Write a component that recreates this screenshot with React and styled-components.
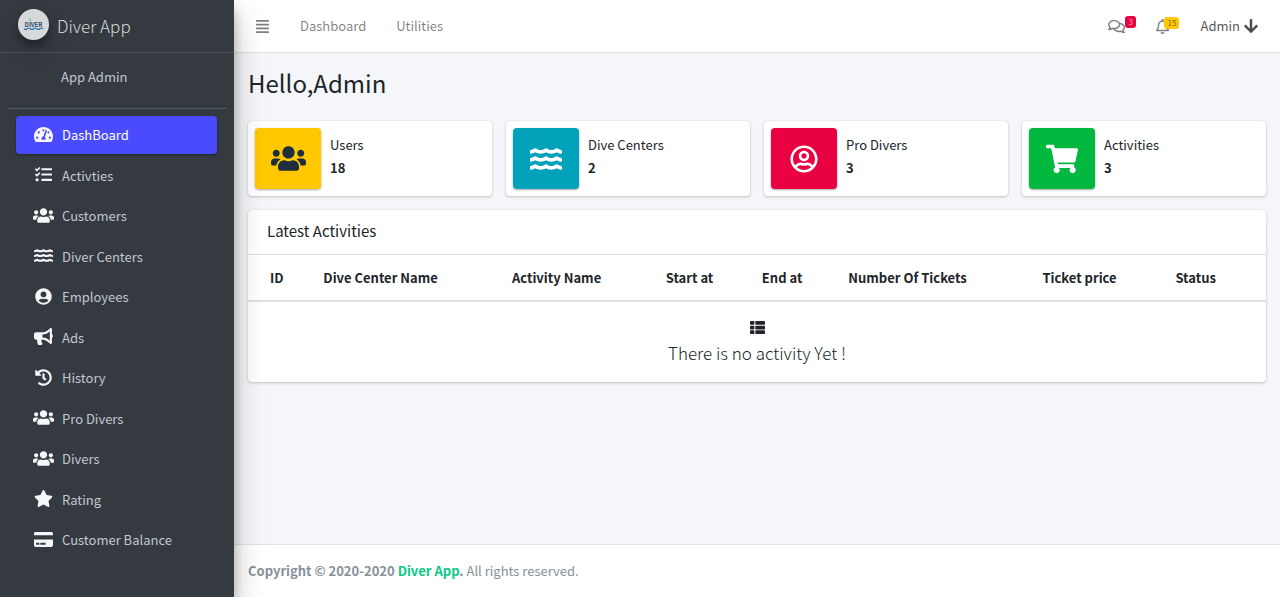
import React from "react";
import styled, { createGlobalStyle, css } from "styled-components";
import {
  FaAlignJustify,
  FaArrowDown,
  FaBullhorn,
  FaCreditCard,
  FaHistory,
  FaRegBell,
  FaRegComments,
  FaRegUserCircle,
  FaShoppingCart,
  FaStar,
  FaTachometerAlt,
  FaTasks,
  FaThList,
  FaUserCircle,
  FaUsers,
  FaWater,
} from "react-icons/fa";

const GlobalStyle = createGlobalStyle`
  *, *::before, *::after { box-sizing: border-box; }
  body {
    margin: 0;
    background: #f4f6f9;
    color: #212529;
    font-family: "Noto Sans CJK SC", "Noto Sans", sans-serif;
    font-size: 13px;
    line-height: 22px;
  }
  a { color: inherit; text-decoration: none; }
  button { font: inherit; color: inherit; background: none; border: 0; padding: 0; cursor: pointer; }
  ul { list-style: none; margin: 0; padding: 0; }
  svg { display: block; flex: none; }
`;

const Page = styled.div`
  display: flex;
  min-height: 100vh;
`;

const Sidebar = styled.aside`
  flex: none;
  width: 234px;
  background: #343a40;
  color: #c2c7d0;
  box-shadow: 0 14px 28px rgba(0, 0, 0, 0.25), 0 10px 10px rgba(0, 0, 0, 0.22);
  z-index: 1;
`;

const Brand = styled.a`
  display: flex;
  align-items: center;
  gap: 8px;
  height: 53px;
  padding: 0 18px;
  border-bottom: 1px solid #4b545c;
  font-size: 17px;
  font-weight: 300;
  color: rgba(255, 255, 255, 0.8);
`;

const LogoDisc = styled.span`
  display: block;
  width: 31px;
  height: 31px;
  margin-bottom: 3px;
  border-radius: 50%;
  background: #d6d8d9;
  box-shadow: 0 10px 20px rgba(0, 0, 0, 0.19), 0 6px 6px rgba(0, 0, 0, 0.23);
`;

const UserPanel = styled.div`
  margin: 0 7px;
  padding: 13px 0 20px 54px;
  border-bottom: 1px solid #4f5962;
`;

const Menu = styled.ul`
  display: flex;
  flex-direction: column;
  justify-content: space-between;
  min-height: 443px;
  margin: 7px 17px 20px 16px;
`;

const MenuLink = styled.a`
  display: flex;
  align-items: center;
  gap: 6px;
  height: 38px;
  padding: 0 15px;
  border-radius: 4px;
  ${(p) =>
    p.$active &&
    css`
      background: #4a4aff;
      color: #fff;
      box-shadow: 0 1px 3px rgba(0, 0, 0, 0.12), 0 1px 2px rgba(0, 0, 0, 0.24);
    `}
`;

const MenuIcon = styled.span`
  display: flex;
  justify-content: center;
  width: 25px;
  margin-bottom: 2px;
  color: #f4f6f9;
`;

const Main = styled.div`
  flex: 1;
  min-width: 0;
  display: flex;
  flex-direction: column;
`;

const TopBar = styled.header`
  display: flex;
  justify-content: space-between;
  align-items: center;
  height: 53px;
  padding: 0 21px;
  background: #fff;
  border-bottom: 1px solid #dee2e6;
  color: rgba(0, 0, 0, 0.5);
`;

const NavGroup = styled.nav`
  display: flex;
  align-items: center;
  gap: 30px;
`;

const AlertButton = styled.button`
  position: relative;
`;

const Badge = styled.span`
  position: absolute;
  top: -2px;
  left: ${(p) => p.$left};
  padding: 0 3px;
  border-radius: 3px;
  font-size: 8px;
  line-height: 12px;
  background: ${(p) => p.$bg};
  color: ${(p) => p.$fg};
`;

const AccountButton = styled.button`
  display: flex;
  align-items: center;
  gap: 3px;
  color: rgba(0, 0, 0, 0.7);
`;

const Content = styled.main`
  flex: 1;
  padding: 14px;
`;

const Title = styled.h1`
  margin: 0 0 22px;
  font-size: 24px;
  line-height: 32px;
  font-weight: 400;
`;

const raised = css`
  background: #fff;
  border-radius: 4px;
  box-shadow: 0 0 1px rgba(0, 0, 0, 0.125), 0 1px 3px rgba(0, 0, 0, 0.2);
`;

const Stats = styled.section`
  display: grid;
  grid-template-columns: repeat(4, 1fr);
  gap: 14px;
  margin-bottom: 14px;
`;

const StatCard = styled.article`
  ${raised}
  display: flex;
  gap: 9px;
  padding: 7px;
`;

const StatIcon = styled.span`
  display: flex;
  align-items: center;
  justify-content: center;
  width: 66px;
  height: 61px;
  border-radius: 4px;
  background: ${(p) => p.$bg};
  color: ${(p) => p.$fg || "#fff"};
  box-shadow: 0 1px 3px rgba(0, 0, 0, 0.12), 0 1px 2px rgba(0, 0, 0, 0.24);
`;

const StatText = styled.div`
  display: flex;
  flex-direction: column;
  padding-top: 5px;
  line-height: 23px;
`;

const Panel = styled.section`
  ${raised}
`;

const PanelTitle = styled.h2`
  margin: 0;
  padding: 9px 19px 12px;
  border-bottom: 1px solid #dfe0e1;
  font-size: 15px;
  line-height: 23px;
  font-weight: 400;
`;

const Table = styled.table`
  width: 100%;
  border-collapse: collapse;

  th {
    padding: 12px 11px 11px;
    text-align: left;
    border-bottom: 2px solid #dee2e6;
  }
  th:first-child { padding-left: 22px; }
  th:last-child { padding-right: 22px; }
  td { padding: 18px 11px 17px; }
`;

const EmptyState = styled.div`
  display: flex;
  flex-direction: column;
  align-items: center;
  gap: 6px;
`;

const EmptyText = styled.p`
  margin: 0;
  font-size: 17px;
  line-height: 24px;
  font-weight: 300;
`;

const Footer = styled.footer`
  padding: 15px 14px;
  background: #fff;
  border-top: 1px solid #dee2e6;
  color: #869099;

  a { color: #0bc986; }
`;

const MENU = [
  { label: "DashBoard", Icon: FaTachometerAlt, size: 19 },
  { label: "Activties", Icon: FaTasks, size: 17 },
  { label: "Customers", Icon: FaUsers, size: 21 },
  { label: "Diver Centers", Icon: FaWater, size: 19 },
  { label: "Employees", Icon: FaUserCircle, size: 17 },
  { label: "Ads", Icon: FaBullhorn, size: 19 },
  { label: "History", Icon: FaHistory, size: 17 },
  { label: "Pro Divers", Icon: FaUsers, size: 21 },
  { label: "Divers", Icon: FaUsers, size: 21 },
  { label: "Rating", Icon: FaStar, size: 19 },
  { label: "Customer Balance", Icon: FaCreditCard, size: 19 },
];

const STATS = [
  { label: "Users", value: 18, Icon: FaUsers, size: 35, bg: "#ffc800", fg: "#1f2d3d" },
  { label: "Dive Centers", value: 2, Icon: FaWater, size: 32, bg: "#03a2bb" },
  { label: "Pro Divers", value: 3, Icon: FaRegUserCircle, size: 28, bg: "#e90141" },
  { label: "Activities", value: 3, Icon: FaShoppingCart, size: 32, bg: "#02b83f" },
];

const COLUMNS = [
  "ID",
  "Dive Center Name",
  "Activity Name",
  "Start at",
  "End at",
  "Number Of Tickets",
  "Ticket price",
  "Status",
];

function Logo() {
  return (
    <LogoDisc>
      <svg width="31" height="31" viewBox="0 0 31 31" aria-hidden="true">
        <path d="M12.3 13V9M12.3 9l-1 2.5" stroke="#6fbfbd" strokeWidth="0.8" fill="none" />
        <text x="15.5" y="18" textAnchor="middle" fontSize="6" fontWeight="700" fill="#2f4a6b">
          DIVER
        </text>
        <path
          d="M6 19.7q1.6 1.4 3.2 0t3.2 0 3.2 0 3.2 0 3.2 0 3.2 0"
          stroke="#2470ad"
          strokeWidth="1.2"
          fill="none"
        />
      </svg>
    </LogoDisc>
  );
}

export default function App() {
  return (
    <>
      <GlobalStyle />
      <Page>
        <Sidebar>
          <Brand href="#">
            <Logo />
            Diver App
          </Brand>
          <UserPanel>
            <a href="#">App Admin</a>
          </UserPanel>
          <nav>
            <Menu>
              {MENU.map(({ label, Icon, size }, i) => (
                <li key={label}>
                  <MenuLink href="#" $active={i === 0}>
                    <MenuIcon>
                      <Icon size={size} />
                    </MenuIcon>
                    {label}
                  </MenuLink>
                </li>
              ))}
            </Menu>
          </nav>
        </Sidebar>
        <Main>
          <TopBar>
            <NavGroup>
              <button aria-label="Toggle menu">
                <FaAlignJustify size={15} />
              </button>
              <a href="#">Dashboard</a>
              <a href="#">Utilities</a>
            </NavGroup>
            <NavGroup>
              <AlertButton aria-label="Messages">
                <FaRegComments size={17} />
                <Badge $left="17px" $bg="#e90141" $fg="#f4a5bb">3</Badge>
              </AlertButton>
              <AlertButton aria-label="Notifications">
                <FaRegBell size={15} />
                <Badge $left="9px" $bg="#ffc800" $fg="#7d6a2a">15</Badge>
              </AlertButton>
              <AccountButton>
                Admin
                <FaArrowDown size={16} />
              </AccountButton>
            </NavGroup>
          </TopBar>
          <Content>
            <Title>Hello,Admin</Title>
            <Stats>
              {STATS.map(({ label, value, Icon, size, bg, fg }) => (
                <StatCard key={label}>
                  <StatIcon $bg={bg} $fg={fg}>
                    <Icon size={size} />
                  </StatIcon>
                  <StatText>
                    <span>{label}</span>
                    <strong>{value}</strong>
                  </StatText>
                </StatCard>
              ))}
            </Stats>
            <Panel>
              <PanelTitle>Latest Activities</PanelTitle>
              <Table>
                <thead>
                  <tr>
                    {COLUMNS.map((name) => (
                      <th key={name} scope="col">{name}</th>
                    ))}
                  </tr>
                </thead>
                <tbody>
                  <tr>
                    <td colSpan={COLUMNS.length}>
                      <EmptyState>
                        <FaThList size={15} />
                        <EmptyText>There is no activity Yet !</EmptyText>
                      </EmptyState>
                    </td>
                  </tr>
                </tbody>
              </Table>
            </Panel>
          </Content>
          <Footer>
            <strong>
              Copyright © 2020-2020 <a href="#">Diver App</a>.
            </strong>{" "}
            All rights reserved.
          </Footer>
        </Main>
      </Page>
    </>
  );
}
